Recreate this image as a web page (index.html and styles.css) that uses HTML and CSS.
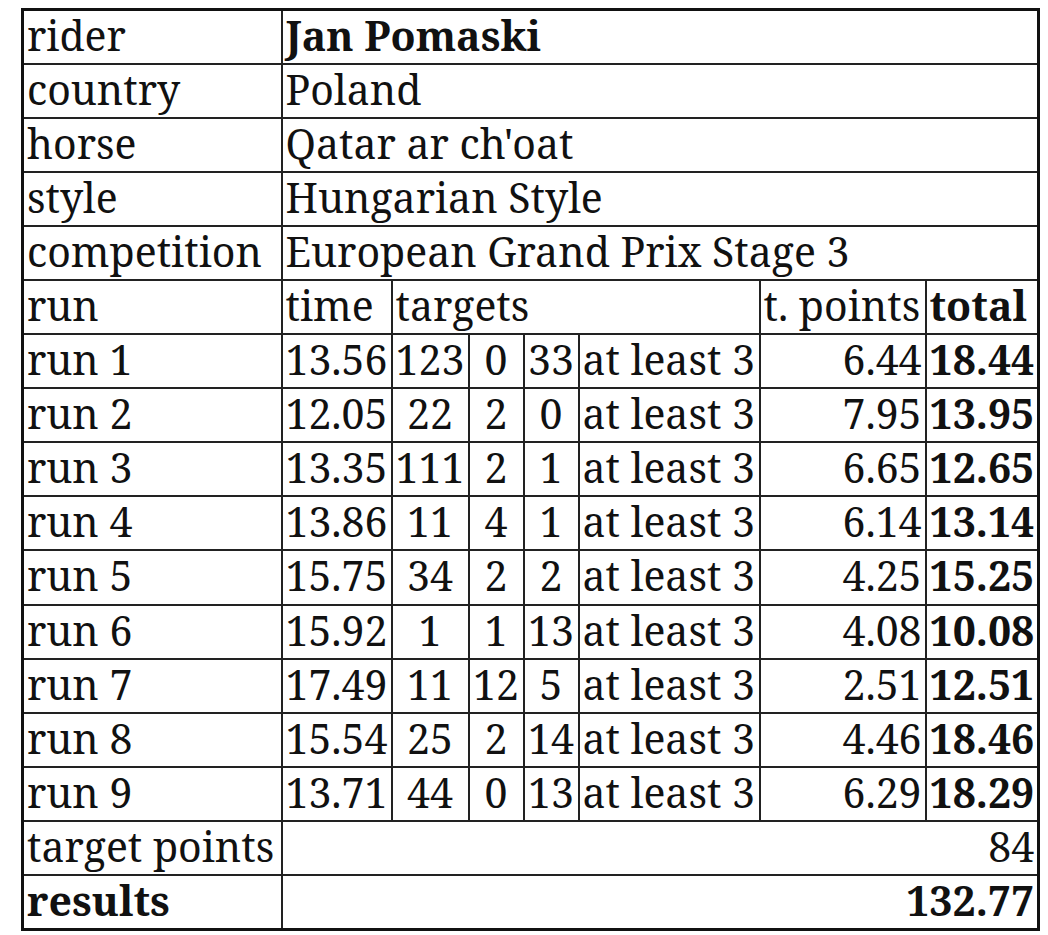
FILE: index.html
```html
<!DOCTYPE html>
<html>
<head>
<meta charset="utf-8">
<link rel="stylesheet" href="styles.css">
</head>
<body>
<table class="results">
  <colgroup>
    <col class="c-label"><col class="c-time"><col class="c-t1"><col class="c-t2"><col class="c-t3"><col class="c-t4"><col class="c-tp"><col class="c-total">
  </colgroup>
  <tbody>
    <tr><td>rider</td><td colspan="7" class="b">Jan Pomaski</td></tr>
    <tr><td>country</td><td colspan="7">Poland</td></tr>
    <tr><td>horse</td><td colspan="7">Qatar ar ch'oat</td></tr>
    <tr><td>style</td><td colspan="7">Hungarian Style</td></tr>
    <tr><td>competition</td><td colspan="7">European Grand Prix Stage 3</td></tr>
    <tr><td>run</td><td>time</td><td colspan="4">targets</td><td>t. points</td><td class="b">total</td></tr>
    <tr><td>run 1</td><td>13.56</td><td class="c">123</td><td class="c">0</td><td class="c">33</td><td>at least 3</td><td class="r">6.44</td><td class="r b">18.44</td></tr>
    <tr><td>run 2</td><td>12.05</td><td class="c">22</td><td class="c">2</td><td class="c">0</td><td>at least 3</td><td class="r">7.95</td><td class="r b">13.95</td></tr>
    <tr><td>run 3</td><td>13.35</td><td class="c">111</td><td class="c">2</td><td class="c">1</td><td>at least 3</td><td class="r">6.65</td><td class="r b">12.65</td></tr>
    <tr><td>run 4</td><td>13.86</td><td class="c">11</td><td class="c">4</td><td class="c">1</td><td>at least 3</td><td class="r">6.14</td><td class="r b">13.14</td></tr>
    <tr><td>run 5</td><td>15.75</td><td class="c">34</td><td class="c">2</td><td class="c">2</td><td>at least 3</td><td class="r">4.25</td><td class="r b">15.25</td></tr>
    <tr><td>run 6</td><td>15.92</td><td class="c">1</td><td class="c">1</td><td class="c">13</td><td>at least 3</td><td class="r">4.08</td><td class="r b">10.08</td></tr>
    <tr><td>run 7</td><td>17.49</td><td class="c">11</td><td class="c">12</td><td class="c">5</td><td>at least 3</td><td class="r">2.51</td><td class="r b">12.51</td></tr>
    <tr><td>run 8</td><td>15.54</td><td class="c">25</td><td class="c">2</td><td class="c">14</td><td>at least 3</td><td class="r">4.46</td><td class="r b">18.46</td></tr>
    <tr><td>run 9</td><td>13.71</td><td class="c">44</td><td class="c">0</td><td class="c">13</td><td>at least 3</td><td class="r">6.29</td><td class="r b">18.29</td></tr>
    <tr><td>target points</td><td colspan="7" class="r">84</td></tr>
    <tr><td class="b">results</td><td colspan="7" class="r b">132.77</td></tr>
  </tbody>
</table>
</body>
</html>
```
FILE: styles.css
```css
html, body {
  background: #fff;
}
body {
  margin: 8px 0 0 21px;
  font-family: "Noto Serif", "DejaVu Serif Condensed", "DejaVu Serif", serif;
  font-size: 41px;
  color: #111;
}
.results {
  border-collapse: collapse;
  table-layout: fixed;
  width: 1016px;
  border: 3px solid #111;
}
.c-label { width: 259px; }
.c-time { width: 110px; }
.c-t1 { width: 77px; }
.c-t2 { width: 55px; }
.c-t3 { width: 55px; }
.c-t4 { width: 181px; }
.c-tp { width: 166px; }
.c-total { width: 113px; }
.results td {
  border: 2px solid #222;
  height: 54.1px;
  padding: 0 3px 3px;
  line-height: 1.1;
  white-space: nowrap;
  vertical-align: middle;
  box-sizing: border-box;
}
.b { font-weight: bold; }
.r { text-align: right; }
.c { text-align: center; }
```
